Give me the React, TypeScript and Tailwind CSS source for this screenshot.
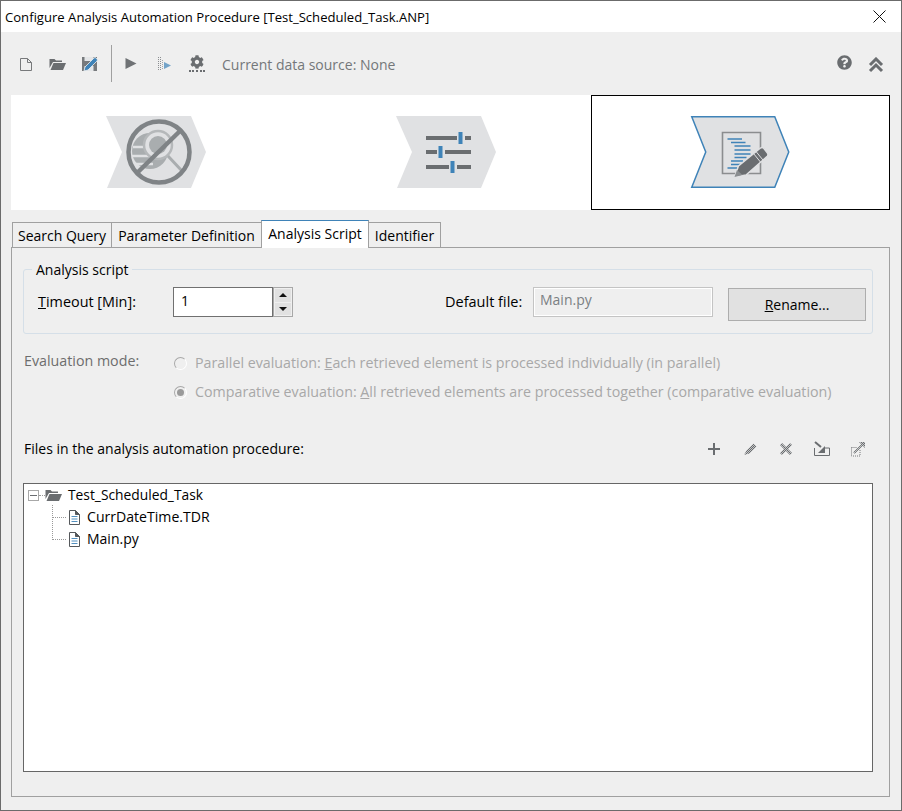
import { FaCog, FaQuestionCircle } from "react-icons/fa";

const GRAY = "#6a6d70";
const BLUE = "#3f83b8";

function NewFileIcon() {
  return (
    <svg width="14" height="16" viewBox="0 0 14 16" className="ml-[18px]">
      <path d="M1.500 2.500h7l4 4v8h-11z" fill="none" stroke="#77797b" />
      <path d="M8.500 2.500v4h4" fill="none" stroke="#77797b" />
    </svg>
  );
}

function OpenFolderIcon({ className, color = GRAY }: { className?: string; color?: string }) {
  return (
    <svg width="17" height="14" viewBox="0 0 17 14" className={className}>
      <path d="M0.500 2h5l1.500 1.500h6v1.500H4L0.500 11z" fill={color} />
      <path d="M4.500 6H17l-3 7H1.500z" fill={color} />
    </svg>
  );
}

function SaveEditIcon() {
  return (
    <svg width="17" height="16" viewBox="0 0 17 16" className="ml-[15px]">
      <path d="M1 1h15v14H1z" fill="#777a7d" />
      <path d="M3.500 1h9v4h-9zM3.500 10h9v5h-9z" fill="#e4e6e8" />
      <path d="M3 15l1-4 9-9q1-1 2 0l1 1q1 1 0 2l-9 9z" fill={BLUE} stroke="#efefef" strokeWidth="0.800" />
    </svg>
  );
}

function PlayIcon() {
  return (
    <svg width="12" height="11" viewBox="0 0 12 11" className="ml-[13px]">
      <path d="M0.500 0l11 5.500-11 5.500z" fill="#6f7275" />
    </svg>
  );
}

function RunDimIcon() {
  return (
    <svg width="14" height="14" viewBox="0 0 14 14" className="ml-[20px]">
      <path d="M1.500 0v14M3.500 0v14" stroke="#8b8e91" strokeDasharray="1 1" />
      <path d="M5.500 3v9" stroke="#a5a8ab" strokeDasharray="1 1" />
      <path d="M7 5l7 3.500-7 3.500z" fill={BLUE} opacity="0.7" />
    </svg>
  );
}

function StepChevron({ active, children }: { active?: boolean; children: React.ReactNode }) {
  return (
    <svg width="102" height="74" viewBox="0 0 102 74">
      {active ? (
        <path d="M1.750 1.750h83l14 35.250-14 35.250h-83l14-35.250z" fill="#e0e1e3" stroke={BLUE} strokeWidth="1.500" />
      ) : (
        <path d="M1 1h85l15 36-15 36H2l15-36z" fill="#e0e1e3" />
      )}
      {children}
    </svg>
  );
}

function NoSearchGlyph() {
  return (
    <>
      <circle cx="45" cy="36" r="18" fill="#a9adaf" />
      <path d="M28 32h15M27 41h18M30 49h18" stroke="#e0e1e3" strokeWidth="2.500" fill="none" />
      <circle cx="53" cy="30" r="14" fill="#e0e1e3" />
      <circle cx="53" cy="30" r="9" fill="#a9adaf" />
      <circle cx="53" cy="30" r="14" fill="none" stroke="#b5b8ba" strokeWidth="2.500" />
      <path d="M63 41l14 15" stroke="#a9adaf" strokeWidth="3" />
      <circle cx="54" cy="37" r="30.500" fill="none" stroke="#7f8386" strokeWidth="4.500" />
      <path d="M32 58l44-43" stroke="#7f8386" strokeWidth="4.500" />
    </>
  );
}

function SlidersGlyph() {
  return (
    <>
      <path d="M31 23h45M31 37h45M31 52h45" stroke={GRAY} strokeWidth="4" />
      <path d="M62 16h8v14h-8zM42 30h8v14h-8zM54 45h8v14h-8z" fill="#e0e1e3" />
      <path d="M63.500 17h4v12h-4zM43.500 31h4v12h-4zM55.500 46h4v12h-4z" fill={BLUE} />
    </>
  );
}

function ScriptGlyph() {
  return (
    <>
      <path d="M32.500 17.500h38v41h-38z" fill="#e0e1e3" stroke="#8b8d8f" strokeWidth="1.600" />
      <path
        d="M37.500 24H52M41 27.500h14.500M44.500 31h16M44.500 35h16M44.500 39h16M44.500 42.500h12M41 46h12M41 49.500h9M37.500 53H47"
        stroke={BLUE}
        strokeWidth="1.700"
      />
      <path
        d="M44.500 62l4-11 21.700-17.700q2-1.500 3.500 0l3.500 4.500q1.500 2 0 3.500L56 60z"
        fill={GRAY}
        stroke="#e0e1e3"
        strokeWidth="1.400"
      />
      <path d="M63.500 38.500l7.500 9.200M66 36.500l7.500 9.200" stroke="#e0e1e3" strokeWidth="1" />
      <path d="M44.500 62l2.500-7 5.500 5z" fill="#8a8d90" />
    </>
  );
}

function TreeFileIcon() {
  return (
    <svg width="13" height="15" viewBox="0 0 13 15" className="shrink-0">
      <path d="M1.500 0.500h6l4 4v10h-10z" fill="#fff" stroke="#55585b" />
      <path d="M7.500 0.500l4 4h-4z" fill="#55585b" stroke="#55585b" />
      <path d="M3.500 6.500h6M3.500 9h6M3.500 11.500h6" stroke={BLUE} strokeWidth="0.900" />
    </svg>
  );
}

function ActionIcon({ children }: { children: React.ReactNode }) {
  return (
    <svg width="18" height="18" viewBox="0 0 18 18" className="ml-[18px]">
      {children}
    </svg>
  );
}

function Dither({ id }: { id: string }) {
  return (
    <defs>
      <pattern id={id} width="2" height="2" patternUnits="userSpaceOnUse">
        <rect width="2" height="2" fill="#c4c5c6" />
        <rect width="1" height="1" fill="#6a6d70" />
        <rect x="1" y="1" width="1" height="1" fill="#6a6d70" />
      </pattern>
    </defs>
  );
}

function Radio({ checked }: { checked?: boolean }) {
  return (
    <span className="flex h-[13px] w-[13px] items-center justify-center rounded-full border border-[#a8a8a8] border-r-white border-b-white bg-[#efefef]">
      {checked && <span className="h-[7px] w-[7px] rounded-full bg-[#9a9a9a]" />}
    </span>
  );
}

function Tab({ label, active, className }: { label: string; active?: boolean; className: string }) {
  if (active) {
    return (
      <div
        className={`z-10 -mb-px flex h-[28px] items-start justify-center border border-b-0 border-[#a0a0a0] border-t-[#3f83b8] bg-white pt-[3px] ${className}`}
      >
        {label}
      </div>
    );
  }
  return (
    <div
      className={`-ml-px flex h-[25px] items-start justify-center border border-b-0 border-[#a0a0a0] bg-[#efefef] pt-[3px] first:ml-0 ${className}`}
    >
      {label}
    </div>
  );
}

export default function App() {
  return (
    <div className="flex h-[811px] w-[902px] flex-col overflow-hidden border border-[#6b6b6b] bg-[#efefef] font-['Open_Sans',sans-serif] text-[14px] leading-[20px] text-black">
      <div className="flex h-[31px] shrink-0 items-center justify-between bg-white pl-[4px] pr-[15px]">
        <span className="text-[13.1px]">Configure Analysis Automation Procedure [Test_Scheduled_Task.ANP]</span>
        <svg width="13" height="13" viewBox="0 0 13 13">
          <path d="M0.500 0.500l12 12M12.500 0.500l-12 12" stroke="#111" />
        </svg>
      </div>

      <div className="flex h-[63px] shrink-0 items-center">
        <NewFileIcon />
        <OpenFolderIcon className="ml-[16px]" />
        <SaveEditIcon />
        <div className="ml-[13px] h-[37px] w-px bg-[#a0a0a0]" />
        <PlayIcon />
        <RunDimIcon />
        <div className="ml-[18px] flex flex-col items-center">
          <FaCog size={14} color="#6a6d70" />
          <div className="mt-[1px] h-[2px] w-[16px] border-b-2 border-dotted border-[#6a6d70]" />
        </div>
        <span className="ml-[17px] mt-[3px] text-[#74777a]">Current data source: None</span>
        <FaQuestionCircle size={15} color="#6a6d70" className="mb-[2px] ml-auto mr-[16px]" />
        <svg width="16" height="16" viewBox="0 0 16 16" className="mr-[17px] mt-[2px]">
          <path d="M2 8l6-6 6 6M2 14l6-6 6 6" fill="none" stroke="#6a6d70" strokeWidth="3" />
        </svg>
      </div>

      <div className="ml-[10px] mr-[11px] flex h-[115px] shrink-0 bg-white">
        <div className="flex w-[290px] items-start justify-center pt-[20px]">
          <StepChevron>
            <NoSearchGlyph />
          </StepChevron>
        </div>
        <div className="flex w-[290px] items-start justify-center pt-[20px]">
          <StepChevron>
            <SlidersGlyph />
          </StepChevron>
        </div>
        <div className="flex flex-1 items-start justify-center border border-black pt-[19px]">
          <StepChevron active>
            <ScriptGlyph />
          </StepChevron>
        </div>
      </div>

      <div className="ml-[11px] mt-[10px] flex h-[27px] shrink-0 items-end">
        <Tab label="Search Query" className="w-[100px]" />
        <Tab label="Parameter Definition" className="w-[151px]" />
        <Tab label="Analysis Script" active className="-ml-px w-[108px]" />
        <Tab label="Identifier" className="w-[73px]" />
      </div>

      <div className="ml-[10px] mr-[11px] h-[550px] shrink-0 border border-[#a0a0a0] pl-[11px] pr-[16px] pt-[21px]">
        <div className="relative flex h-[65px] rounded-[3px] border border-[#d5dfe8] pl-[14px] pt-[17px]">
          <span className="absolute left-[8px] top-[-10px] bg-[#efefef] px-[4px]">Analysis script</span>
          <span className="mt-[5px] w-[135px] text-[14.4px]">
            <u>T</u>imeout [Min]:
          </span>
          <div className="flex h-[30px] w-[100px] items-start border border-[#707070] bg-white pl-[7px] pt-[3px]">1</div>
          <div className="flex h-[30px] w-[20px] flex-col gap-px border border-[#a8a8a8] p-px">
            <div className="flex flex-1 items-center justify-center bg-[#e1e1e1]">
              <svg width="8" height="4" viewBox="0 0 8 4">
                <path d="M4 0l4 4H0z" fill="#111" />
              </svg>
            </div>
            <div className="flex flex-1 items-center justify-center bg-[#e1e1e1]">
              <svg width="8" height="4" viewBox="0 0 8 4">
                <path d="M4 4L0 0h8z" fill="#111" />
              </svg>
            </div>
          </div>
          <span className="ml-[152px] mt-[5px] w-[88px] text-[14.5px]">Default file:</span>
          <div className="h-[30px] w-[180px] border border-[#c4c4c4] bg-[#efefef] pl-[6px] pt-[2px] text-[#7b7f83] shadow-[inset_0_0_0_1px_#fff]">
            Main.py
          </div>
          <div className="ml-[15px] mt-px flex h-[33px] w-[138px] items-center justify-center border border-[#adadad] bg-[#e1e1e1]">
            <span>
              <u>R</u>ename...
            </span>
          </div>
        </div>

        <div className="mt-[19px] flex text-[14.25px]">
          <span className="-mt-[2px] ml-px w-[150px] text-[#6d6d6d]">Evaluation mode:</span>
          <div className="flex flex-col gap-[9px] text-[#a8a8a8]">
            <div className="flex items-center gap-[8px]">
              <Radio />
              <span>
                Parallel evaluation: <u>E</u>ach retrieved element is processed individually (in parallel)
              </span>
            </div>
            <div className="flex items-center gap-[8px]">
              <Radio checked />
              <span>
                Comparative evaluation: <u>A</u>ll retrieved elements are processed together (comparative evaluation)
              </span>
            </div>
          </div>
        </div>

        <div className="mt-[37px] flex h-[20px] items-center">
          <span className="ml-px">Files in the analysis automation procedure:</span>
          <div className="ml-auto flex items-center pr-[6px]">
            <ActionIcon>
              <path d="M9 3v12M3 9h12" stroke={GRAY} strokeWidth="2" />
            </ActionIcon>
            <ActionIcon>
              <Dither id="ditherPencil" />
              <path d="M3 15l2.500-4.500 7-7 3 3-7 7z" fill="url(#ditherPencil)" />
            </ActionIcon>
            <ActionIcon>
              <Dither id="ditherCross" />
              <path d="M4 4l10 10M14 4L4 14" stroke="url(#ditherCross)" strokeWidth="3" />
            </ActionIcon>
            <ActionIcon>
              <path d="M1.500 8v7.500h15V8H12" fill="none" stroke={GRAY} />
              <path d="M2 2l6 5" stroke={GRAY} strokeWidth="2" />
              <path d="M12 13V6l-7 7z" fill={GRAY} />
            </ActionIcon>
            <ActionIcon>
              <Dither id="ditherExport" />
              <path d="M2.500 7.500h6M2.500 7.500v8.500h8.500v-6" fill="none" stroke="#77797b" strokeDasharray="1 1" />
              <path d="M5 13L15 3" stroke="url(#ditherExport)" strokeWidth="2" />
              <path d="M10 2h6v6z" fill="url(#ditherExport)" />
            </ActionIcon>
          </div>
        </div>

        <div className="relative mt-[24px] h-[289px] border border-[#666] bg-white pl-[4px]">
          <div className="flex h-[22px] items-center">
            <div className="flex h-[11px] w-[11px] items-center justify-center border border-[#a8a8a8]">
              <div className="h-px w-[7px] bg-[#6a6d70]" />
            </div>
            <div className="h-px w-[6px] border-b border-dotted border-[#999]" />
            <OpenFolderIcon />
            <span className="ml-[6px] text-[13.8px]">Test_Scheduled_Task</span>
          </div>
          <div className="flex h-[22px] items-center pl-[24px]">
            <div className="mr-[2px] w-[14px] border-b border-dotted border-[#999]" />
            <TreeFileIcon />
            <span className="ml-[6px] text-[14.1px]">CurrDateTime.TDR</span>
          </div>
          <div className="flex h-[22px] items-center pl-[24px]">
            <div className="mr-[2px] w-[14px] border-b border-dotted border-[#999]" />
            <TreeFileIcon />
            <span className="ml-[6px]">Main.py</span>
          </div>
          <div className="absolute left-[28px] top-[21px] h-[33px] border-l border-dotted border-[#999]" />
        </div>
      </div>
    </div>
  );
}
